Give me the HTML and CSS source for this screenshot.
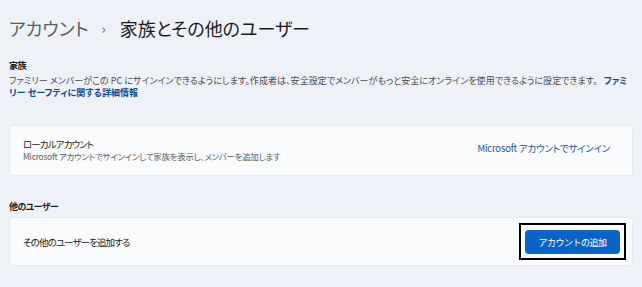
FILE: index.html
```html
<!DOCTYPE html>
<html lang="ja">
<head>
    <meta charset="UTF-8">
    <meta name="viewport" content="width=device-width, initial-scale=1.0">
    <title>家族とその他のユーザー</title>
    <link rel="stylesheet" href="styles.css">
</head>
<body>
    <div class="page">
        <h1 class="breadcrumb">
            <span class="crumb-parent">アカウント</span>
            <span class="crumb-sep">›</span>
            <span class="crumb-current">家族とその他のユーザー</span>
        </h1>

        <h2 class="section-title">家族</h2>
        <p class="section-desc">
            ファミリー メンバーがこの PC にサインインできるようにします。作成者は、安全設定でメンバーがもっと安全にオンラインを使用できるように設定できます。
            <a href="#" class="desc-link">ファミリー セーフティに関する詳細情報</a>
        </p>

        <div class="card card-local">
            <div class="card-text">
                <div class="card-title">ローカルアカウント</div>
                <div class="card-sub">Microsoft アカウントでサインインして家族を表示し、メンバーを追加します</div>
            </div>
            <a href="#" class="card-link">Microsoft アカウントでサインイン</a>
        </div>

        <h2 class="section-title section-other">他のユーザー</h2>
        <div class="card card-other">
            <div class="card-title">その他のユーザーを追加する</div>
            <span class="focus-ring">
                <button class="btn-primary">アカウントの追加</button>
            </span>
        </div>
    </div>
</body>
</html>
```

FILE: styles.css
```css
body {
    margin: 0;
    background-color: #eef2f8;
    font-family: "Noto Sans CJK JP", "Noto Sans", sans-serif;
    font-feature-settings: "palt";
    color: #1b1b1b;
}
.page {
    padding: 16px 9px 0 9px;
}
.breadcrumb {
    margin: 0;
    font-size: 18px;
    line-height: 24px;
    font-weight: 400;
    display: flex;
    align-items: center;
}
.crumb-parent {
    color: #5c5c5c;
}
.crumb-sep {
    color: #5c5c5c;
    font-size: 14px;
    margin: 0 14px 0 13px;
}
.crumb-current {
    color: #1b1b1b;
}
.section-title {
    margin: 19px 0 0 0;
    font-size: 9px;
    line-height: 14px;
    font-weight: 700;
    letter-spacing: -0.6px;
}
.section-desc {
    margin: 2px 0 0 0;
    padding-right: 4px;
    font-size: 9px;
    line-height: 12px;
    letter-spacing: 0.05px;
    color: #4a4a4a;
}
.desc-link {
    color: #124a8c;
    font-weight: 700;
    text-decoration: none;
    margin-left: 4px;
}
.card {
    display: flex;
    align-items: center;
    justify-content: space-between;
    background-color: #f9fbfd;
    border: 1px solid #e6eaf0;
    border-radius: 4px;
    box-sizing: border-box;
}
.card-local {
    margin-top: 26px;
    height: 51px;
    padding: 0 22px 2px 13px;
}
.card-title {
    font-size: 9.5px;
    line-height: 14px;
    letter-spacing: -0.9px;
}
.card-sub {
    font-size: 8.5px;
    line-height: 11px;
    color: #5c5c5c;
    letter-spacing: -0.3px;
}
.card-link {
    font-size: 9.5px;
    color: #28508a;
    text-decoration: none;
    letter-spacing: -0.2px;
    margin-bottom: 3px;
}
.section-other {
    margin-top: 24px;
}
.card-other {
    margin-top: 3px;
    height: 49px;
    padding: 0 6px 0 13px;
}
.focus-ring {
    display: flex;
    border: 2px solid #000000;
    padding: 5px 4px 4px 4px;
}
.btn-primary {
    width: 95px;
    height: 24px;
    background-color: #0b63c4;
    color: #ffffff;
    border: none;
    border-radius: 4px;
    font-family: inherit;
    font-size: 9px;
    letter-spacing: -0.5px;
    cursor: pointer;
}
```
